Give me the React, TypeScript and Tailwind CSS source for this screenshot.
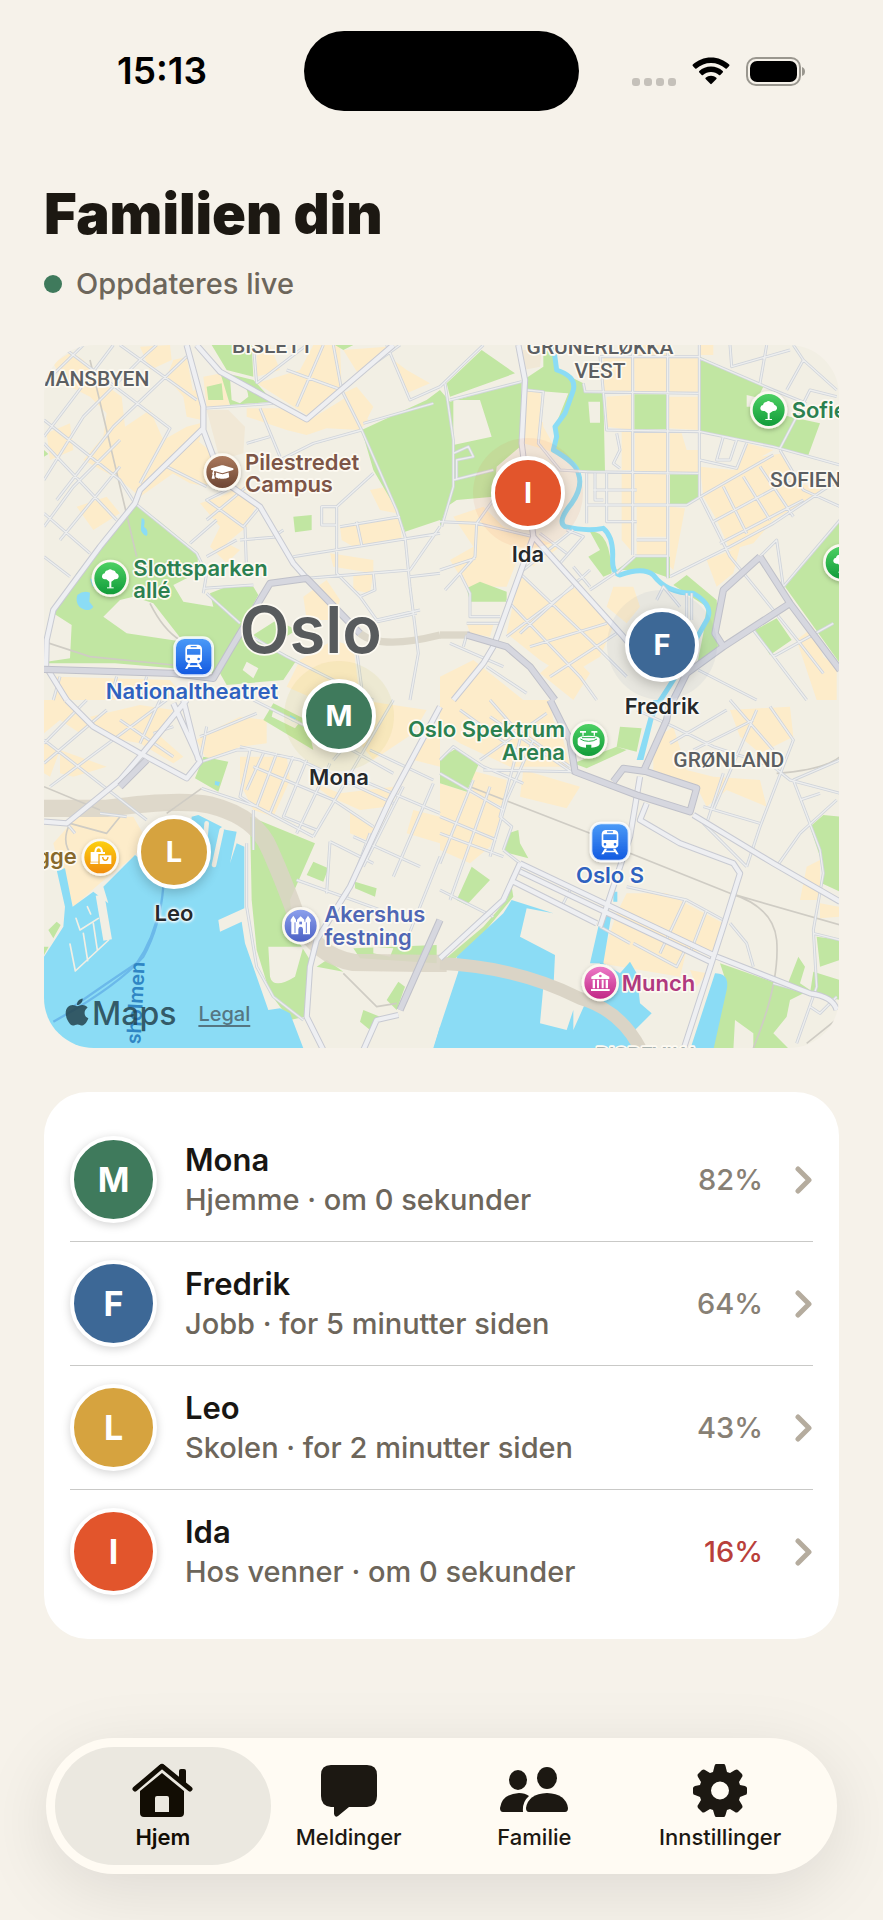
import React, { useState } from 'react';
import { FaApple, FaGraduationCap } from 'react-icons/fa';

const members = [
  { id: 'mona', name: 'Mona', initial: 'M', status: 'Hjemme · om 0 sekunder', battery: 82, color: 'bg-[#3f7a5c]', halo: 'bg-[#c9b93a]/10', x: 295, y: 371 },
  { id: 'fredrik', name: 'Fredrik', initial: 'F', status: 'Jobb · for 5 minutter siden', battery: 64, color: 'bg-[#3d6896]', halo: 'bg-[#3d6896]/6', x: 618, y: 300 },
  { id: 'leo', name: 'Leo', initial: 'L', status: 'Skolen · for 2 minutter siden', battery: 43, color: 'bg-[#d6a33f]', halo: 'bg-[#d6a33f]/0', x: 130, y: 507 },
  { id: 'ida', name: 'Ida', initial: 'I', status: 'Hos venner · om 0 sekunder', battery: 16, color: 'bg-[#e2552c]', halo: 'bg-[#e2552c]/7', x: 484, y: 148 },
];

const MAP_WIDTH = 795;
const MAP_HEIGHT = 703;

// The map is made of four tiles, each drawn in its own coordinates
const tiles = [
  {
    id: 'nw',
    x: 0,
    y: 0,
    blocks:
      'M40 70L95 35 130 60 190 130 245 170 255 260 330 210 370 300 440 260 480 250 480 300 400 400 300 470 240 420 130 360 190 290 200 220 150 170 70 130Z M110 500L200 470 240 520 160 570Z M300 20L390 15 395 60 330 90Z M400 60L440 50 460 160 430 170 380 110Z M500 200L490 110 545 100 570 200Z M650 20L690 15 720 90 650 110Z M650 130L780 90 820 15 900 15 905 150 800 225Z M620 205L740 205 800 245 930 165 985 240 960 270 860 265 800 285 740 270 620 230Z M910 160L950 140 1000 200 980 240Z M910 30L960 110 1020 60 1040 20Z M1060 60L1100 90 1170 130 1100 160Z M20 280L90 250 100 330 30 360Z M380 390L470 300 520 340 500 440 450 430Z M480 490L540 470 600 440 650 490 620 560 560 610 600 630 560 670 510 620 540 560Z M900 560L1080 530 1085 600 940 620 905 600Z M870 640L1000 660 1000 700 880 680Z M940 700L1000 700 990 760 940 750Z M990 450L1040 440 1070 520 1020 510Z M790 770L860 720 900 780 880 840 800 840Z M780 960L880 900 940 920 960 1080 830 1080 740 1040Z M50 1010L390 1020 440 1080 40 1080Z M430 170L480 140 485 240 440 230Z',
    campus: 'M500 210L565 210 615 260 610 340 540 360Z',
    parks:
      'M285 490L360 545 475 640 470 700 400 735 430 785 520 800 510 760 560 740 640 740 655 765 620 830 610 960 520 1000 400 985 225 970 20 970 30 880 95 855 40 820 110 700 220 560Z M540 1000L590 870 770 960 730 1020 560 1035Z M965 270L1160 180 1200 150 1200 540 1095 575 1070 510 1000 390Z M540 95L640 120 650 130 700 185 570 195Z M515 15L635 15 640 110 560 90Z M500 140L545 130 550 180 505 180Z M760 530L815 525 815 570 765 577Z M885 15L940 15 910 30Z M640 885L710 840 770 870 690 920Z M12 330L25 342 12 350Z',
    clearings: 'M240 780L190 830 260 880 430 905 340 790 280 770Z M25 850L95 855 90 955 20 965Z M570 115Q620 120 625 170L600 190 575 180Z M620 965L655 985 640 1015 608 990Z',
    water: 'M305 535Q318 535 312 560 328 572 320 588 300 580 303 560Z M112 765Q130 750 150 758L148 785 160 800Q145 820 118 800Q105 785 112 765Z M150 715L165 725 158 740Z',
    tunnels: 'M960 880Q1020 930 1200 885',
    rails: 'M150 60L290 650 M330 790Q370 870 420 900 M12 905L150 950 400 975',
    streets:
      'M12 290L220 15 M12 420L130 230 300 60 350 15 M50 480L220 260 440 50 M12 560L100 440 240 300 M60 600L240 380 M60 15L390 265 300 430 M240 15L470 180 M12 240L240 420 285 490 M12 310L230 540 M12 520L150 640 M12 650L90 710 M130 15L12 130 M880 15L905 150 965 270 1070 510 1095 590 1110 740 1135 940 1110 1080 M1040 15L1110 180 1200 140 M490 205L700 190 M660 205L720 350 M620 310L690 290 M900 560L1080 530 M950 545L965 615 M760 650L1200 580 M800 715L1110 690 1200 560 M905 150L740 90 M800 15L650 130 M850 15L770 200 M1000 400L890 500 890 700 960 770 1010 840 1140 810 M845 500L890 500 890 555 845 555Z M965 270L820 310 700 370 M285 490L470 640 500 700 490 760 M500 540L620 440 M450 610L530 540 M615 560L620 700 M660 500L610 560 500 480 560 450 M600 600L720 590 M500 650L590 600 M490 745L640 735 M500 760L600 850 M600 870L740 950 1000 1080 M380 380L500 440 M700 590L730 570 M1200 700L1110 710 M950 930L970 1080 M970 250L1180 190 M1000 700L1005 750 960 770 M640 15L650 130 M905 140L1080 15 M990 850L1130 820 M40 1080L60 1010 M230 1010L210 1080 M320 1010L300 1080',
    roads: 'M440 15L490 200 490 270 520 350 560 430 660 500 760 670 800 715 M490 265L300 450 285 490 180 620 40 810 20 900 18 980 80 1080 M470 15L540 95 800 238 1060 15',
    arterials: 'M12 988L400 1000 520 1015 570 930 690 730 800 715 960 880',
  },
  {
    id: 'ne',
    x: 1200,
    y: 0,
    blocks:
      'M260 150L300 155 310 260 360 350 320 330 250 310Z M490 50L575 50 575 155 490 155Z M580 15L680 15 680 155 585 155Z M690 55L775 55 775 155 690 155Z M500 170L575 165 575 270 500 260Z M685 170L775 170 775 270 685 265Z M585 275L680 275 680 490 585 490Z M545 275L580 275 580 390 545 390Z M690 280L725 280 740 330 775 330 775 400 690 395Z M545 400L580 400 580 640 545 600Z M590 500L680 500 680 590 590 590Z M590 600H680V645H590Z M690 500L735 505 700 690 690 680Z M780 15h40v30h-40Z M780 380L880 390 960 350 1030 340 1080 430 1150 450 1000 540 940 610 870 630 830 540 790 470Z M920 310L1000 330 890 390Z M40 530L130 500 190 560 360 620 280 680 240 640 200 740 80 740 30 660 100 620Z M240 700L330 790 400 740 520 860 480 950 380 1010 300 960 200 880Z M80 850L160 855 150 890 90 880Z M520 740L580 740 600 800 560 850 500 800Z M800 660L900 620 880 700 830 740Z M380 930L450 1000 400 1080 300 1000Z M1070 900L1120 860 1150 950 1190 980 1190 1080 1130 1080Z M0 1010L100 960 250 1080 0 1080Z',
    campus: 'M240 30L305 30 300 80 250 90Z',
    parks:
      'M20 130L125 30 225 100 30 170Z M0 150L30 185 245 125 240 320 170 380 160 470 50 480 20 500 0 560Z M250 120L310 80 310 40 345 15 350 90 430 130 435 155 490 160 495 395 420 390 340 330 345 250 380 160 260 150Z M780 50L970 140 940 200 1050 230 1140 250 1105 345 780 275Z M583 163h95v105h-95Z M690 403h85v70l-30 20h-55Z M450 575Q510 570 515 700L490 710 445 650 480 630Z M530 690L585 650 690 650 690 715 620 690Z M700 735L740 705 830 780 835 850 820 890 850 920 770 980 790 880 800 800Z M80 745L120 725 200 755 200 785 90 785Z M1200 540L1200 970 1035 740Z M945 870L1010 835 1055 900 990 945Z',
    clearings: 'M40 180L120 180 155 290 40 315Z M445 185H480V248H450Z M305 165L385 160 345 260 305 245Z M920 165L960 175 950 200 920 200Z',
    water: '',
    tunnels: 'M0 885L90 885',
    rails: '',
    streets:
      'M430 130L435 155 775 160 M480 50L490 155 500 270 780 275 1000 320 1200 375 M440 395L775 400 M440 495L740 495 790 465 1000 345 M440 400V550 M500 400V545L590 545 M578 15V645 M683 15V715 M778 15V470 M590 600H683 M585 648H683 M530 700L585 650 M480 50H778 M780 55L1000 150 1100 190 M690 710L870 620 1000 550 1150 450 1200 420 M780 470L870 650 960 760 1080 910 1150 1000 M850 440L920 580 M910 410L990 540 M960 380L1060 530 M820 545L1050 420 M840 610L1090 480 M1020 330L1090 450 1200 500 M870 15L875 80 1050 30 M980 15L960 130 M1060 15L1090 60 1040 150 M1090 60L1190 150 M1020 325L1070 230 1110 150 1190 170 M1200 540L1030 740 M780 360L890 385 920 310 M830 360L850 290 890 300 870 360Z M15 130L40 300 40 440 5 560 M40 420L160 390 M50 420V360L100 350 85 320 40 340 M30 180L245 125 M0 140L130 15 M260 150L310 155 295 310 360 390 440 395 M0 545L110 550 280 590 M110 550L105 650 15 750 M0 690L105 655 M110 550L160 480 M380 570L430 590 360 670 M300 580L380 640 M400 570L250 690 M450 750L525 700 M400 680L450 740 M240 700L450 900 560 1010 M200 780L420 1010 470 1080 M450 690L240 880 M500 850L270 920 M530 880L330 1010 M400 740L200 890 M60 700L90 760V830H180 M80 850H180 M80 885L70 920 M30 910L190 980 M140 980L260 1060 M1000 950L1180 850 M940 870L1100 1080 M960 650L1010 600 1030 740 M650 780L670 740 720 800 M740 760V840 M755 760V840 M775 990L950 1080 M460 450H590 M465 400V480H490 M530 280L540 330 520 370 540 385',
    roads: 'M235 15L255 120 245 310 280 590 M280 590L240 700 160 920 130 970 40 1080 M280 590L550 890 600 950',
    arterials: 'M80 885L200 920 270 980 330 1060 345 1080 M960 650L850 750 825 880 850 920 740 1000 700 1080 M960 650L1050 790 1200 990 M1050 790L850 920',
  },
  {
    id: 'sw',
    x: 0,
    y: 1080,
    blocks:
      'M12 0L80 0 150 80 120 100 60 60 12 100Z M150 50L300 15 400 30 350 100 430 170 400 190 300 130 190 110Z M500 100L600 50 680 60 680 130 600 140 500 180 470 120Z M600 170L740 170 750 240 700 350 640 330 600 250Z M960 0L1160 30 1120 100 1000 180 960 130Z M800 240L900 280 1060 260 1040 320 960 330 870 290Z M930 330L1010 390 980 420 930 400Z M1120 330L1200 350V430L1100 400Z M60 150L200 200 100 230 60 220Z M40 430L110 350 280 350 320 420 280 470 180 550 100 620 50 470Z M1120 180L1170 100 1200 90 1200 200Z M12 130L60 150 30 230 12 220Z',
    campus: '',
    parks:
      'M465 235L490 170 565 185 535 275Z M670 60L700 10 800 60 820 150Z M630 350L825 430 750 600 760 700 810 780 795 950 750 960 690 880 650 750 635 600Z M820 485L865 505 850 545 800 525Z M945 545L1010 565 1005 590 945 565Z M1075 845L1095 860 1070 930 1040 900Z M970 930L1020 950 990 990 960 965Z M860 780L910 815 830 800Z M940 745L1190 735 1190 790 960 775Z M25 690L50 665 62 675 40 715Z M12 740L26 740 12 765Z',
    clearings: 'M685 740L790 740 765 830Q700 870 690 830Z M700 30L780 65 765 85 695 50Z M1000 740L1060 745 1050 770 1000 760Z',
    water:
      'M12 770L70 680 75 620 50 510 75 505 98 620 160 575 205 610 190 560 285 465 400 560 500 420 520 380 560 390 590 395 570 490 590 430 613 440 613 625 535 660 540 695 605 665 615 730 685 930 720 925 750 940 792 1050H0Z M455 350L475 345 545 380 515 500 450 440Z M1180 1044L1200 980V1044Z M750 45L768 55 760 65 748 58Z M525 243L540 246 536 258 524 254Z',
    tunnels: '',
    rails: 'M12 260L180 330 M485 265L380 340 M240 350L200 400 90 370 M90 370Q60 430 100 470 M910 820L1010 920 1070 910',
    streets:
      'M12 130L140 0 M12 190L200 30 M30 260L380 0 M12 120L320 360 M485 265L650 320 820 410 M500 80L480 180 M480 110L650 40 M640 0L900 130 1060 220 M470 190L590 150 630 150 600 290 650 320 M670 160L620 270 M710 160L650 320 M760 170L690 340 M800 180L730 350 830 390 M870 190L770 400 M1060 0L820 410 M870 425L1000 490 M640 200L880 300 1000 380 M600 140L780 180 1060 310 M990 150L1180 240 M940 230L1200 340 M1090 260L970 500 M1180 250L1060 530 M940 410L1140 500 M870 425L860 580 M980 60L880 180 M770 540L1050 640 M620 430L620 620 650 800 700 890 790 960 M80 370L105 400 M180 340L260 350 M240 60L400 170 M360 0L300 130 M990 400L920 590 M1200 470L1100 720 M400 80L340 100 M640 330V450',
    roads: 'M80 0L160 80 300 160 440 235 480 185 400 10 M430 0L475 180 M12 365L80 370 240 240 300 170 440 0 M1200 20L1050 300 930 560 830 720 810 800 800 950 850 1050 M970 1050L1010 960 1075 945',
    arterials: 'M240 260L320 180 M1080 930L1200 660',
  },
  {
    id: 'se',
    x: 1200,
    y: 1080,
    blocks:
      'M0 0L330 0 340 60 370 120 390 200 210 200 60 130 0 90Z M250 210L420 260 380 325 240 290Z M0 250L90 280 190 330 150 440 90 490 0 450Z M90 210L200 240 190 320 100 280Z M640 120L700 80 740 210 820 230 960 240 980 320 860 270 800 320 770 260 640 210Z M870 30L1050 20 1060 110 960 160 900 110Z M560 580L680 580 850 670 820 760 740 750 720 830 480 790 530 640Z M1100 500L1140 480 1140 600 1080 600Z M1140 610L1197 620V650L1140 655Z M750 810L800 820 770 860Z',
    campus: '',
    parks:
      'M0 175L50 145 115 195 80 275 0 250Z M540 80L605 85 590 155 530 140Z M400 190L530 140 560 150 440 205Z M205 400L235 390 240 430 265 475 190 455Z M95 500L150 540 80 615 50 600Z M0 790L130 680 200 600 215 560 220 590 130 700 30 790Z M840 790L1040 860 1075 770 1095 800 1080 850 1110 870 1050 900 1040 950 1000 1000 1044 1044 L940 1050 940 1000 885 960 880 1050H800L860 850Z M1110 380L1150 345 1200 350V575L1145 550 1150 500Z M1130 710L1200 720V780L1140 800Z M1120 815L1200 840V900L1110 880Z',
    clearings: '',
    water:
      'M215 600L340 640 260 625 240 710 345 765 340 870 310 860 300 970 380 990 400 930 400 990 440 900 480 790 450 790 475 680 500 640 515 640 490 790 540 820 570 785 590 820 600 910 635 940 575 1000 600 1050H-20L0 980 55 815 50 770 190 640Z M750 1050L825 820Q870 820 860 870L820 1050Z M665 0L640 0 590 180 610 180 640 60Z M520 575h12v30h-12Z',
    tunnels: '',
    rails: 'M90 260L450 400 M570 460L870 580 1200 675 M870 580Q1000 620 1010 720 1020 850 940 1044 M1010 220Q1150 210 1200 170 M1200 950L1100 1030',
    streets:
      'M250 80L180 350 215 380 190 450 M150 50L400 220 M130 210L400 215 M0 180L40 140 130 200 250 250 M190 330L0 220 M280 120L200 300 150 470 M100 240L0 490 M150 260L30 600 M0 400L190 470 M0 350L170 420 M190 450L240 490 M0 570L160 650 M150 0L220 80 390 200 M320 40L120 180 M60 30L240 160 M590 30L700 80 820 140 1000 200 1050 240 1200 280 M990 20L1060 120 960 380 920 500 M870 0L1000 150 M950 30L820 330 M1060 240L1140 450 1150 520 1120 690 1130 860 1070 1030 M790 320L960 370 M800 370L850 220 M1190 300L1080 400 1010 500 M690 130L860 30 M760 150L940 60 M560 560L740 600 850 660 M735 600L660 760 M800 630L750 760 M580 730L710 800 740 740 M480 680L570 730 M390 570L365 620 M870 670L920 730 940 800 M1120 700L1200 720 M1110 920L1140 940 1190 890 M790 370L920 500 M1060 240L1200 180 M1110 880L1000 850 M1080 300L1140 280',
    roads: 'M600 230L590 290 570 410 480 680 M620 310L600 360 720 430 880 490 900 520 850 680 730 1050 M760 345L1000 490 1200 605 M240 490L820 765 M240 515L810 785 M240 490L190 600 0 775 M220 545L470 670 M830 770L1110 880Q1180 890 1190 930',
    arterials: 'M330 0L390 120 405 215 590 285 750 335 770 265 620 215 550 205 520 245 M690 0L680 60 610 215',
  },
];

function TileLayer({ layer, fill, stroke, width }: { layer: string; fill?: string; stroke?: string; width?: number }) {
  return (
    <>
      {tiles.map((tile: any) => (
        <path
          key={tile.id}
          d={tile[layer]}
          transform={`translate(${tile.x} ${tile.y})`}
          fill={fill || 'none'}
          stroke={stroke}
          strokeWidth={width}
          strokeLinejoin="round"
        />
      ))}
    </>
  );
}

function PlaceIcon({ x, y, fill, square, children }: { x: number; y: number; fill: string; square?: boolean; children: React.ReactNode }) {
  return (
    <g transform={`translate(${x} ${y})`} filter="url(#poi-shadow)">
      {square ? (
        <rect x="-57" y="-57" width="114" height="114" rx="30" fill={`url(#${fill})`} stroke="#fff" strokeOpacity="0.85" strokeWidth="8" />
      ) : (
        <circle r="52" fill={`url(#${fill})`} stroke="#fbf8f0" strokeWidth="8" />
      )}
      {children}
    </g>
  );
}

function TreeGlyph() {
  return (
    <g fill="#fff">
      <path d="M-3 28V10L-12 3H-16Q-26 2-25-7-24-15-17-15-15-24-7-24-1-30 6-24 15-25 17-16 26-13 25-4 23 4 13 3L3 10V28Z" />
      <path d="M-10 27H10V30H-10Z" />
    </g>
  );
}

function TrainGlyph() {
  return (
    <g fill="#fff">
      <path
        fillRule="evenodd"
        d="M-14-36H14Q24-34 25-24V10Q24 18 16 19H-16Q-24 18-25 10V-24Q-24-34-14-36ZM-9-32V-28H9V-32ZM-19-23Q-20-23-20-21V-6H20V-21Q20-23 19-23ZM-15 3A4 4 0 1 0-15 11 4 4 0 1 0-15 3ZM15 3A4 4 0 1 0 15 11 4 4 0 1 0 15 3Z"
      />
      <path d="M-16 20H-9L-12 26H12L9 20H16L26 37H19L15 31H-15L-19 37H-26Z" />
    </g>
  );
}

const labelGroups = [
  { fill: '#7d5547', anchor: 'start', lines: [[615, 390, 'Pilestredet'], [615, 457, 'Campus']] },
  { fill: '#2b8050', anchor: 'start', lines: [[280, 707, 'Slottsparken'], [280, 773, 'allé'], [2255, 235, 'Sofienberg']] },
  { fill: '#2b8050', anchor: 'end', lines: [[1575, 1192, 'Oslo Spektrum'], [1575, 1260, 'Arena']] },
  { fill: '#2f62c0', anchor: 'middle', lines: [[456, 1077, 'Nationaltheatret'], [1710, 1630, 'Oslo S']] },
  { fill: '#5067b5', anchor: 'start', lines: [[853, 1747, 'Akershus'], [853, 1816, 'festning']] },
  { fill: '#b0397f', anchor: 'start', lines: [[1745, 1952, 'Munch']] },
  { fill: '#86682c', anchor: 'end', lines: [[110, 1573, 'Brygge']] },
] as const;

function OsloMap() {
  return (
    <svg viewBox="12 15 2385 2109" preserveAspectRatio="xMidYMid slice" className="block h-full w-full" role="img" aria-label="Kart over Oslo">
      <defs>
        <linearGradient id="poi-brown" x2="0" y2="1"><stop stopColor="#ad7b5e" /><stop offset="1" stopColor="#6b4432" /></linearGradient>
        <linearGradient id="poi-green" x2="0" y2="1"><stop stopColor="#4fd265" /><stop offset="1" stopColor="#0f9a38" /></linearGradient>
        <linearGradient id="poi-blue" x2="0" y2="1"><stop stopColor="#4c9cf8" /><stop offset="1" stopColor="#1258e0" /></linearGradient>
        <linearGradient id="poi-yellow" x2="0" y2="1"><stop stopColor="#fdd213" /><stop offset="1" stopColor="#f08a06" /></linearGradient>
        <linearGradient id="poi-indigo" x2="0" y2="1"><stop stopColor="#8ea2ee" /><stop offset="1" stopColor="#4a5fc4" /></linearGradient>
        <linearGradient id="poi-pink" x2="0" y2="1"><stop stopColor="#ee7cca" /><stop offset="1" stopColor="#c02583" /></linearGradient>
        <filter id="poi-shadow" x="-30%" y="-30%" width="160%" height="170%">
          <feDropShadow dx="0" dy="5" stdDeviation="6" floodColor="#000" floodOpacity="0.25" />
        </filter>
      </defs>

      <rect x="12" y="15" width="2385" height="2109" fill="#f2efe4" />
      <TileLayer layer="blocks" fill="#fdecca" />
      <TileLayer layer="campus" fill="#f1e8d6" />
      <TileLayer layer="parks" fill="#c1e6a2" />
      <TileLayer layer="clearings" fill="#f2efe4" />
      <TileLayer layer="water" fill="#8bdcf5" />

      {/* piers */}
      <g fill="none" stroke="#f2efe4" strokeLinecap="round" strokeLinejoin="round">
        <path d="M180 1665L203 1800" strokeWidth="26" strokeLinecap="butt" />
        <path d="M108 1735L120 1770 175 1735M142 1700L152 1722M90 1812L106 1893 206 1800M130 1780L143 1862M160 1750L172 1830" strokeWidth="5" />
        <path d="M522 1575L545 1470M490 1560L500 1450" strokeWidth="14" />
      </g>

      {/* river */}
      <path
        d="M1540 15L1550 90Q1610 110 1600 150 1590 180 1575 220L1545 260 1550 290 1540 330Q1610 370 1615 400 1630 440 1595 490 1550 545 1575 560 1640 575 1690 565 1720 590 1718 650 1715 700 1740 705 1810 680 1840 705 1880 760 1960 760 2030 800 1995 850L1900 1020 1855 1090"
        fill="none"
        stroke="#8bdcf5"
        strokeWidth="15"
        strokeLinejoin="round"
      />

      {/* ferry route */}
      <g fill="none" stroke="#6bb9ea" strokeWidth="7">
        <path d="M370 1640Q360 1760 310 1850 230 1940 40 2045" />
        <path d="M360 1700Q340 1800 290 1870 200 1930 100 2000" />
      </g>

      <TileLayer layer="tunnels" stroke="#dcd7c9" width={22} />
      <g fill="none" stroke="#dad4c6">
        <path d="M12 1405L200 1405Q420 1375 510 1395 650 1430 690 1530 730 1620 770 1730 830 1850 940 1867L1150 1870 1220 1870" strokeWidth="52" strokeOpacity="0.85" />
        <path d="M1200 1870Q1430 1880 1620 1975 1740 2010 1800 2124" strokeWidth="38" />
      </g>

      <TileLayer layer="rails" stroke="#cfccc4" width={5} />
      <TileLayer layer="streets" stroke="#d0d4da" width={9} />
      <TileLayer layer="streets" stroke="#edeeee" width={4} />
      <TileLayer layer="roads" stroke="#c8cad2" width={19} />
      <TileLayer layer="roads" stroke="#eeeff2" width={13} />
      <TileLayer layer="arterials" stroke="#bfc0c9" width={22} />
      <TileLayer layer="arterials" stroke="#d6d7df" width={16} />

      <g stroke="#fdfaf2" strokeWidth="10" strokeLinejoin="round" paintOrder="stroke">
        <g fontFamily="Roboto, sans-serif" fontWeight="500" fontSize="63" fill="#5c5f62">
          <text x="328" y="138" textAnchor="end">HOMANSBYEN</text>
          <text x="698" y="40" textAnchor="middle">BISLETT</text>
          <text x="1680" y="43" textAnchor="middle">GRÜNERLØKKA</text>
          <text x="1680" y="115" textAnchor="middle">VEST</text>
          <text x="2190" y="442">SOFIENBERG</text>
          <text x="1900" y="1280">GRØNLAND</text>
          <text x="1822" y="2166" textAnchor="middle" fill="#a9b3b0">BISPEVIKA</text>
        </g>
        <text x="812" y="940" textAnchor="middle" fontFamily="Inter, sans-serif" fontWeight="600" fontSize="195" fill="#585b5d">
          Oslo
        </text>
        <g fontFamily="Inter, sans-serif" fontWeight="600" fontSize="66">
          {labelGroups.map((group) => (
            <g key={group.lines[0][2]} fill={group.fill} textAnchor={group.anchor}>
              {group.lines.map(([x, y, text]) => (
                <text key={text} x={x} y={y}>{text}</text>
              ))}
            </g>
          ))}
        </g>
      </g>
      <text transform="translate(314 1866) rotate(-87)" textAnchor="end" fontFamily="Inter, sans-serif" fontWeight="600" fontSize="60" fill="#2f86c4">
        sholmen
      </text>

      <PlaceIcon x={547} y={396} fill="poi-brown">
        <FaGraduationCap x="-34" y="-34" size={68} color="#fff" />
      </PlaceIcon>
      <PlaceIcon x={211} y={715} fill="poi-green"><TreeGlyph /></PlaceIcon>
      <PlaceIcon x={2186} y={210} fill="poi-green"><TreeGlyph /></PlaceIcon>
      <PlaceIcon x={2405} y={668} fill="poi-green"><TreeGlyph /></PlaceIcon>
      <PlaceIcon x={461} y={950} fill="poi-blue" square><TrainGlyph /></PlaceIcon>
      <PlaceIcon x={1710} y={1506} fill="poi-blue" square><TrainGlyph /></PlaceIcon>
      <PlaceIcon x={181} y={1552} fill="poi-yellow">
        <path d="M-29-16H-18Q-17-32-5-33 7-32 8-16H14V-10H-6V13H-29ZM-12-16H2Q1-26-5-27-11-26-12-16Z" fill="#fff" fillRule="evenodd" />
        <path d="M-30 15H-6V20H-30Z" fill="#fff" />
        <path d="M-2-6H33V20H-2Z" fill="#fff" />
        <path d="M7-1Q8 9 15 9 22 9 23-1" fill="none" stroke="#f5a00a" strokeWidth="4" />
      </PlaceIcon>
      <PlaceIcon x={782} y={1757} fill="poi-indigo">
        <path d="M-28 26V-12H-30V-18L-22-30-14-18V-12H-11V-18L0-28 11-18V-12H14V-18L22-30 30-18V-12H28V26H7V10Q6 3 0 3-6 3-7 10V26Z" fill="#fff" />
        <path d="M-17-10V22M17-10V22" stroke="#6c80d8" strokeWidth="3" />
        <path d="M-4-12H4V-4H-4Z" fill="#6c80d8" />
      </PlaceIcon>
      <PlaceIcon x={1646} y={1200} fill="poi-green">
        <path d="M-33-4Q-30-13 0-13 30-13 33-4V12Q30 22 8 23V14H-8V23Q-30 22-33 12Z" fill="#fff" />
        <path d="M-25-3Q-15 4 0 4 15 4 25-3M-20-7H20" fill="none" stroke="#25b04a" strokeWidth="3" />
        <path d="M-26-27H-8V-22H-15V-13H-19V-22H-26ZM8-27H26V-22H19V-13H15V-22H8Z" fill="#fff" />
      </PlaceIcon>
      <PlaceIcon x={1681} y={1928} fill="poi-pink">
        <path d="M0-33L27-18V-11H-27V-18ZM-23-9H-16V17H-23ZM-10-9H-4V17H-10ZM4-9H10V17H4ZM16-9H23V17H16ZM-28 19H28V25H-28Z" fill="#fff" />
        <circle cy="-20" r="4" fill="#dd58ac" />
      </PlaceIcon>
    </svg>
  );
}

const tabs = [
  {
    id: 'hjem',
    label: 'Hjem',
    icon: (
      <>
        <path d="M6 26L32 4Q33 3 34 4L61 26" fill="none" stroke="currentColor" strokeWidth="5" strokeLinecap="round" />
        <path d="M50 8Q50 6 52 6H55Q57 6 57 8V21L50 15Z" />
        <path fillRule="evenodd" d="M33 10L55 28V50Q55 54 51 54H15Q11 54 11 50V28ZM28 33Q26 33 26 35V49H40V35Q40 33 38 33Z" />
      </>
    ),
  },
  {
    id: 'meldinger',
    label: 'Meldinger',
    icon: <path d="M16 2H52Q62 2 62 12V33Q62 43 52 44H34L23 53Q20 55 19 51V44H16Q6 43 6 33V12Q6 2 16 2Z" />,
  },
  {
    id: 'familie',
    label: 'Familie',
    icon: (
      <>
        <ellipse cx="18" cy="17" rx="9" ry="10" />
        <ellipse cx="47" cy="15" rx="10" ry="11" />
        <path d="M3 49Q0 49 0 45Q2 31 19 30Q25 30 29 33Q22 39 23 49Z" />
        <path d="M29 49Q26 49 26 45Q28 31 47 30Q66 31 68 45Q68 49 65 49Z" />
      </>
    ),
  },
  {
    id: 'innstillinger',
    label: 'Innstillinger',
    icon: (
      <path
        fillRule="evenodd"
        d="M30 1H38Q39 1 39.500 3L41 9 44 10 49 7Q51 6 52 7L56 11Q57 13 56 14L53 19 54 22 59 23Q61 24 61 25V30Q61 32 59 32L54 34 53 37 56 42Q57 44 56 45L52 49Q50 50 49 49L44 46 41 47 39.500 52Q39 54 38 54H30Q29 54 28.500 52L27 47 24 46 19 49Q17 50 16 49L12 45Q11 43 12 42L15 37 14 34 9 32Q7 32 7 30V25Q7 24 9 23L14 22 15 19 12 14Q11 12 12 11L16 7Q18 6 19 7L24 10 27 9 28.500 3Q29 1 30 1ZM34 18.500A9 9 0 1 0 34 36.500 9 9 0 1 0 34 18.500Z"
      />
    ),
  },
];

function StatusBar() {
  return (
    <div className="grid grid-cols-[1fr_275px_1fr] items-center pt-[31px] text-black">
      <div className="pl-5 text-center text-[37px] leading-[40px] font-semibold">15:13</div>
      <div className="h-[80px] rounded-full bg-black" />
      <div className="flex items-center justify-center gap-4 pr-6">
        <div className="flex gap-1 self-end">
          <span className="h-2 w-2 rounded-[3px] bg-[#c5c1ba]" />
          <span className="h-2 w-2 rounded-[3px] bg-[#c5c1ba]" />
          <span className="h-2 w-2 rounded-[3px] bg-[#c5c1ba]" />
          <span className="h-2 w-2 rounded-[3px] bg-[#c5c1ba]" />
        </div>
        <svg width="38" height="28" viewBox="0 0 38 28" aria-hidden="true">
          <path d="M19 0.500C26 0.500 32.500 3.200 37.200 7.600Q37.800 8.300 37.200 9L34.800 11.400Q34.200 12 33.500 11.400C29.500 7.900 24.500 5.900 19 5.900S8.500 7.900 4.500 11.400Q3.800 12 3.200 11.400L0.800 9Q0.200 8.300 0.800 7.600C5.500 3.200 12 0.500 19 0.500Z" />
          <path d="M19 9.600C23.500 9.600 27.600 11.300 30.700 14.100Q31.400 14.800 30.700 15.500L28.300 17.900Q27.700 18.500 27 17.900C24.800 16 22 15 19 15S13.200 16 11 17.900Q10.300 18.500 9.700 17.900L7.300 15.500Q6.600 14.800 7.300 14.100C10.400 11.300 14.500 9.600 19 9.600Z" />
          <path d="M19 18.700C21.100 18.700 23 19.500 24.400 20.700Q25 21.300 24.400 22L19.700 26.800Q19 27.500 18.300 26.800L13.600 22Q13 21.300 13.600 20.700C15 19.500 16.900 18.700 19 18.700Z" />
        </svg>
        <svg width="60" height="29" viewBox="0 0 60 29" aria-hidden="true">
          <rect x="1" y="1" width="53" height="27" rx="9" fill="none" stroke="#9a978f" strokeWidth="2" />
          <rect x="4" y="4" width="47" height="21" rx="7" />
          <path d="M56 10Q59 11 59 14.500T56 19Z" fill="#9a978f" />
        </svg>
      </div>
    </div>
  );
}

export default function App() {
  const [activeTab, setActiveTab] = useState('hjem');

  return (
    <div className="flex min-h-screen flex-col bg-[#f6f2ea] font-['Inter',sans-serif] text-[#1c1812]">
      <StatusBar />

      <main className="px-[44px]">
        <header className="pt-[71px]">
          <h1 className="text-[56px] leading-[64px] font-black">Familien din</h1>
          <p className="mt-5 flex items-center gap-3.5 text-[29px] leading-[36px] font-medium text-[#6d665b]">
            <span className="h-[18px] w-[18px] rounded-full bg-[#3f7a5c]" />
            Oppdateres live
          </p>
        </header>

        <section className="relative mt-[43px] aspect-[795/703] overflow-hidden rounded-[50px]">
          <OsloMap />

          {members.map((member) => (
            <button
              key={member.id}
              type="button"
              className="absolute flex h-[110px] w-[110px] -translate-x-1/2 -translate-y-1/2 items-center justify-center"
              style={{ left: `${(member.x / MAP_WIDTH) * 100}%`, top: `${(member.y / MAP_HEIGHT) * 100}%` }}
            >
              <span className={`absolute inset-0 rounded-full ${member.halo}`} />
              <span className={`relative flex h-[74px] w-[74px] items-center justify-center rounded-full border-4 border-white text-[29px] font-bold text-white shadow-[0_4px_12px_rgba(0,0,0,0.2)] ${member.color}`}>
                {member.initial}
              </span>
              <span className="absolute top-[102px] text-[22px] leading-[28px] font-semibold text-[#26292b] [text-shadow:0_0_3px_#fff,0_0_3px_#fff,0_0_3px_#fff,0_0_4px_#fff]">
                {member.name}
              </span>
            </button>
          ))}

          <div className="absolute bottom-[14px] left-[22px] flex items-center gap-[22px]">
            <span className="flex items-center gap-1 text-[32px] leading-[40px] font-medium text-[#23434e]/85">
              <FaApple className="-mt-1 h-[28px] w-[22px] scale-110" />
              Maps
            </span>
            <a href="#legal" className="text-[20px] leading-[28px] font-medium text-[#557682] underline decoration-2 underline-offset-4">
              Legal
            </a>
          </div>
        </section>

        <ul className="mt-[44px] rounded-[44px] bg-white px-[26px] py-[26px]">
          {members.map((member) => (
            <li key={member.id} className="border-b border-[#c9c9c7] last:border-b-0">
              <button type="button" className="flex h-[123px] w-full items-center text-left">
                <span className={`flex h-[87px] w-[87px] shrink-0 items-center justify-center rounded-full border-4 border-white text-[34px] font-bold text-white shadow-[0_2px_10px_rgba(0,0,0,0.18)] ${member.color}`}>
                  {member.initial}
                </span>
                <span className="ml-7 min-w-0 flex-1">
                  <span className="block text-[31px] leading-[40px] font-semibold text-[#181613]">{member.name}</span>
                  <span className="block text-[29px] leading-[40px] font-medium text-[#6d665b]">{member.status}</span>
                </span>
                <span className={`text-[29px] font-medium ${member.battery < 20 ? 'text-[#b93f3b]' : 'text-[#878075]'}`}>
                  {member.battery}%
                </span>
                <svg width="20" height="28" viewBox="0 0 20 28" className="ml-[30px]" fill="none" stroke="#b5ac9e" strokeWidth="5" strokeLinecap="round" strokeLinejoin="round" aria-hidden="true">
                  <path d="M5 3L16 14 5 25" />
                </svg>
              </button>
            </li>
          ))}
        </ul>
      </main>

      <nav className="mx-[46px] mt-auto mb-[46px] grid grid-cols-4 rounded-full bg-[#fffbf3] px-6 py-[9px] shadow-[0_16px_70px_rgba(0,0,0,0.1)]">
        {tabs.map((tab) => (
          <button
            key={tab.id}
            type="button"
            onClick={() => setActiveTab(tab.id)}
            className={`-mx-[15px] flex h-[118px] flex-col items-center rounded-full pt-4 ${
              activeTab === tab.id ? 'bg-[#ebe8e0] font-semibold text-[#120d04]' : 'font-medium text-[#1c1812]'
            }`}
          >
            <svg width="68" height="56" viewBox="0 0 68 56" fill="currentColor" aria-hidden="true">
              {tab.icon}
            </svg>
            <span className="mt-1 text-[22px] leading-[28px]">{tab.label}</span>
          </button>
        ))}
      </nav>
    </div>
  );
}
